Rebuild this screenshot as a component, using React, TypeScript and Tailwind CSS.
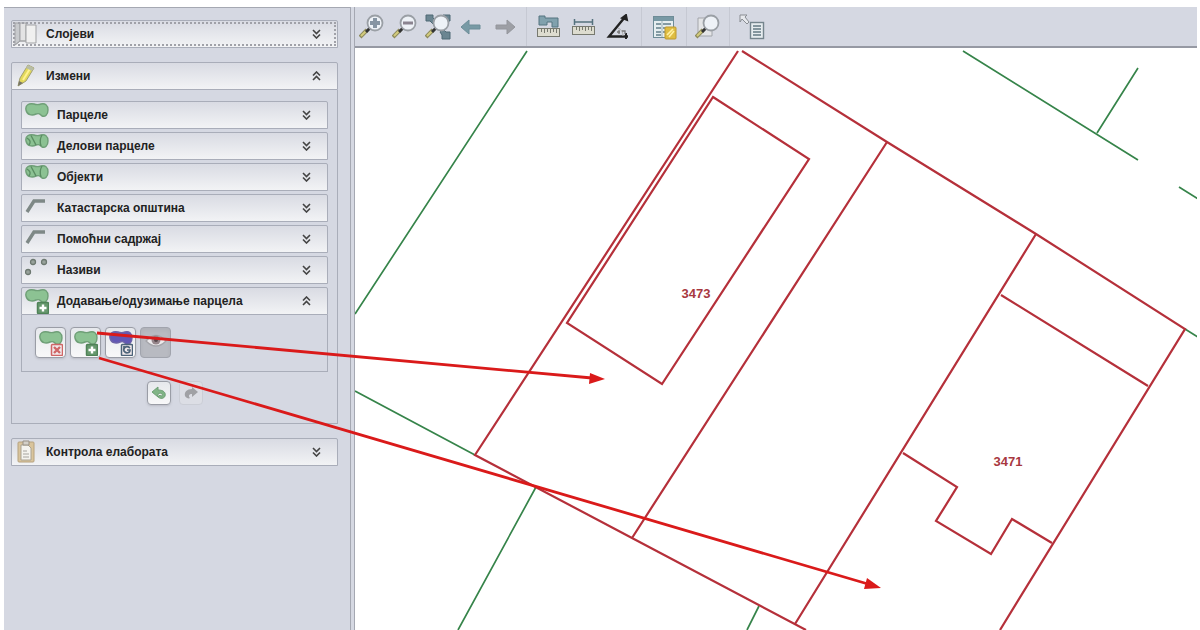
import { useState, type ReactNode } from "react";

type IconProps = { children: ReactNode };

function ToolIcon({ children }: IconProps) {
  return (
    <svg viewBox="0 0 26 26" className="block size-[26px]" fill="none">
      {children}
    </svg>
  );
}

const BLOB =
  "M2 8C1 3 5 1 10 2C13 3 14 3 17 2C21 1 24 3 24 8C24 13 21 15 18 14C16 12 15 11 12 12C8 14 3 13 2 8Z";

function Blob({ split = false, fill = "#8cc293", stroke = "#6f9f77" }) {
  return (
    <g strokeWidth="1.4">
      <path d={BLOB} fill={fill} stroke={stroke} />
      {split && <path d="M7 2.500L12 12M18 2Q15 7 17 13M3 5Q8 8 5 12" stroke="#5b8d63" />}
    </g>
  );
}

function Magnifier({ children }: { children?: ReactNode }) {
  return (
    <>
      <path d="M1 23L8 16" stroke="#8d8a5c" strokeWidth="4" />
      <path d="M2 22L7 17" stroke="#d3cc7d" strokeWidth="2" />
      <path d="M7 18L11 14" stroke="#333" strokeWidth="3" />
      <circle cx="16" cy="9" r="7.5" fill="#eef2f7" stroke="#9a9fa5" strokeWidth="1.8" />
      {children}
    </>
  );
}

function Ruler({ y }: { y: number }) {
  return (
    <g stroke="#77796f">
      <rect x="1.5" y={y + 0.5} width="22" height="8" fill="#dddccf" />
      <path d={`M5.5 ${y + 1}v3M8.5 ${y + 1}v4M11.5 ${y + 1}v3M14.5 ${y + 1}v4M17.5 ${y + 1}v3M20.5 ${y + 1}v4`} />
    </g>
  );
}

const navTools = [
  {
    label: "Увећај",
    icon: (
      <Magnifier>
        <path d="M11 9H21M16 4V14" stroke="#8795a3" strokeWidth="4" />
      </Magnifier>
    ),
  },
  {
    label: "Умањи",
    icon: (
      <Magnifier>
        <path d="M11 9H21" stroke="#8b8490" strokeWidth="3" />
      </Magnifier>
    ),
  },
  {
    label: "Цео приказ",
    icon: (
      <>
        <path d="M1 1H8V4L11 7L8 10L5 7H1ZM25 1H18V4L15 7L18 10L21 7H25ZM25 25H17V21L15 18L18 15L21 18H25Z" fill="#6b8591" stroke="#4e6874" />
        <Magnifier />
      </>
    ),
  },
  {
    label: "Назад",
    icon: <path d="M3 13L11 6V11H22V15H11V20Z" fill="#789aa5" stroke="#6d8d98" />,
  },
  {
    label: "Напред",
    icon: <path d="M24 13L16 6V11H5V15H16V20Z" fill="#9d9fa5" stroke="#94969c" />,
  },
];

const measureTools = [
  {
    label: "Мерење површине",
    icon: (
      <>
        <path d="M3 2H9V4H22V13H16V8H11V11H3Z" fill="#81a1ad" stroke="#547480" />
        <Ruler y={14} />
      </>
    ),
  },
  {
    label: "Мерење дужине",
    icon: (
      <>
        <path d="M3 8H22M3.5 5V11M21.5 5V11" stroke="#55717e" strokeWidth="1.5" />
        <Ruler y={12} />
      </>
    ),
  },
  {
    label: "Мерење угла",
    icon: (
      <>
        <path d="M19 3L3 22.500H22" stroke="#222" strokeWidth="2.4" />
        <path d="M16 4L20 1L21 6ZM20 19V25" fill="#222" stroke="#222" strokeWidth="2" />
        <path d="M12 14Q17 16 17 22" stroke="#aaa" />
        <path d="M11 18H14M13 16V20M16 17H19V20" stroke="#777" strokeWidth="1.3" />
      </>
    ),
  },
];

const tableTools = [
  {
    label: "Табела",
    icon: (
      <>
        <rect x="2.5" y="2.5" width="20" height="21" fill="#e6eef0" stroke="#6e8c97" />
        <rect x="3" y="3" width="19" height="4" fill="#7899a5" />
        <path d="M5 10H10M12 10H20M5 14H10M12 14H20M5 18H10M12 18H20M5 21H10" stroke="#64808b" strokeWidth="1.6" />
        <path d="M11 7V23" stroke="#9bb1b8" />
        <rect x="14" y="13" width="11" height="12" rx="1" fill="#dfbd42" stroke="#bd982e" />
        <path d="M16 21L22 15M18 23L23 17" stroke="#fff0a0" strokeWidth="1.7" />
      </>
    ),
  },
];

const searchTools = [
  {
    label: "Претрага",
    icon: (
      <>
        <path d="M3 4H17V22H3Z" fill="#e4e5e7" stroke="#a2a5aa" />
        <Magnifier />
      </>
    ),
  },
];

const infoTools = [
  {
    label: "Информације",
    icon: (
      <>
        <path d="M1 1H8L6 3L10 8L8 10L3 5L1 8Z" fill="#e7e9ed" stroke="#898d93" />
        <rect x="11.5" y="8.5" width="13" height="16" fill="#e6ecef" stroke="#75858d" strokeWidth="1.4" />
        <path d="M14 12H22M14 15H22M14 18H22M14 21H22" stroke="#647a84" strokeWidth="1.3" />
      </>
    ),
  },
];

const toolGroups = [
  { tools: navTools, className: "gap-[7px] pl-1 pr-[9px]" },
  { tools: measureTools, className: "gap-[9px] px-[9px]" },
  { tools: tableTools, className: "px-[9px]" },
  { tools: searchTools, className: "px-2" },
  { tools: infoTools, className: "px-[9px]" },
];

function Toolbar() {
  return (
    <div className="flex h-[41px] items-center border-b-2 border-[#9699a3] bg-[#d5d8e2]">
      {toolGroups.map((group, i) => (
        <div
          key={i}
          className={`flex h-full items-center ${group.className} ${
            i < toolGroups.length - 1 ? "border-r border-[#c6c9d3]" : ""
          }`}
        >
          {group.tools.map((tool) => (
            <button key={tool.label} type="button" aria-label={tool.label}>
              <ToolIcon>{tool.icon}</ToolIcon>
            </button>
          ))}
        </div>
      ))}
    </div>
  );
}

function Chevrons({ open }: { open: boolean }) {
  return (
    <svg viewBox="0 0 9 10" className="h-[10px] w-[9px] shrink-0" fill="none" stroke="#444" strokeWidth="1.6">
      <path d={open ? "M1 4.5L4.5 1L8 4.5M1 9L4.5 5.5L8 9" : "M1 1L4.5 4.5L8 1M1 5.5L4.5 9L8 5.5"} />
    </svg>
  );
}

type SectionProps = {
  title: string;
  icon: ReactNode;
  nested?: boolean;
  focused?: boolean;
  defaultOpen?: boolean;
  children?: ReactNode;
};

function Section({ title, icon, nested, focused, defaultOpen = false, children }: SectionProps) {
  const [open, setOpen] = useState(defaultOpen);

  return (
    <section>
      <button
        type="button"
        aria-expanded={open}
        onClick={() => setOpen((o) => !o)}
        className={`flex h-7 w-full items-center rounded-t-xs border border-[#a9adb9] bg-linear-to-b from-[#d9dbe3] to-[#f2f3f5] pr-4 text-left text-xs font-bold text-[#222] ${
          nested ? "pl-[3px]" : "pl-[2px]"
        } ${focused ? "outline-2 -outline-offset-4 outline-dotted outline-[#a0a1a8]" : ""}`}
      >
        <span className="mr-2 h-full w-6 shrink-0">{icon}</span>
        <span className="flex-1 whitespace-nowrap">{title}</span>
        <Chevrons open={open} />
      </button>
      {open && children && <div className="border border-t-0 border-[#a9adb9]">{children}</div>}
    </section>
  );
}

function ItemIcon({ children }: IconProps) {
  return (
    <svg viewBox="1 0 24 26" className="block h-[26px] w-6" fill="none">
      {children}
    </svg>
  );
}

function Badge({ kind }: { kind: "add" | "remove" | "refresh" }) {
  const color = kind === "add" ? "#4f8257" : kind === "remove" ? "#cf6666" : "#4c6379";
  return (
    <g stroke={color} transform="translate(-1 -1)">
      <rect x="14.5" y="15.5" width="11" height="11" rx="1" fill={kind === "add" ? "#67986e" : "#f1e9eb"} strokeWidth="1.5" />
      {kind === "add" && <path d="M20 17.5V24.5M16.5 21H23.5" stroke="#fff" strokeWidth="2.4" />}
      {kind === "remove" && <path d="M17 18L23 24M23 18L17 24" strokeWidth="2.4" />}
      {kind === "refresh" && <path d="M23 19C19 16 16 19 17 22C19 25 23 24 23 21H20M17 17V20" strokeWidth="1.7" />}
    </g>
  );
}

const blobIcon = (
  <ItemIcon>
    <Blob />
  </ItemIcon>
);
const splitIcon = (
  <ItemIcon>
    <Blob split />
  </ItemIcon>
);
const lineIcon = (
  <ItemIcon>
    <path d="M3 17L10 6H21" stroke="#7e8886" strokeWidth="3.4" />
  </ItemIcon>
);
const dotsIcon = (
  <ItemIcon>
    <g fill="#98a29b" stroke="#6d7870" strokeWidth="1.3">
      <circle cx="9" cy="5" r="2.5" />
      <circle cx="20" cy="5" r="2.5" />
      <circle cx="4" cy="15" r="2.5" />
    </g>
  </ItemIcon>
);

const layers = [
  { title: "Парцеле", icon: blobIcon },
  { title: "Делови парцеле", icon: splitIcon },
  { title: "Објекти", icon: splitIcon },
  { title: "Катастарска општина", icon: lineIcon },
  { title: "Помоћни садржај", icon: lineIcon },
  { title: "Називи", icon: dotsIcon },
];

const raised =
  "flex items-center justify-center rounded-sm border border-[#9a9da6] bg-linear-to-b from-[#e6e8ec] to-[#f8f8f9] shadow-sm";

function ParcelTools() {
  return (
    <div className="flex gap-1 px-[13px] pt-3 pb-[13px]">
      <button type="button" aria-label="Уклони парцелу" className={`size-[31px] ${raised}`}>
        <ItemIcon>
          <Blob />
          <Badge kind="remove" />
        </ItemIcon>
      </button>
      <button type="button" aria-label="Додај парцелу" className={`size-[31px] ${raised}`}>
        <ItemIcon>
          <Blob />
          <Badge kind="add" />
        </ItemIcon>
      </button>
      <button type="button" aria-label="Освежи парцеле" className={`size-[31px] ${raised}`}>
        <ItemIcon>
          <Blob fill="#6257b5" stroke="#6c62a8" />
          <Badge kind="refresh" />
        </ItemIcon>
      </button>
      <button
        type="button"
        aria-label="Прикажи"
        aria-pressed="true"
        className="flex size-[31px] items-center justify-center rounded-sm border border-[#a1a4ad] bg-[#b8bac1] shadow-inner"
      >
        <ItemIcon>
          <path d="M3 11Q13 0 23 11Q13 21 3 11Z" fill="#eceaec" stroke="#a5a5aa" strokeWidth="1.3" />
          <circle cx="13" cy="10" r="4.5" fill="#96868b" />
          <circle cx="13" cy="10" r="2" fill="#57474b" />
        </ItemIcon>
      </button>
    </div>
  );
}

function Sidebar() {
  return (
    <aside className="w-[347px] shrink-0 border-t border-r border-[#a5a8b2] bg-[#d5d8e2] pt-3 pr-3 pl-[7px]">
      <div className="flex flex-col gap-[14px]">
        <Section
          title="Слојеви"
          focused
          icon={
            <svg viewBox="0 0 24 26" className="h-[26px] w-6" fill="#e3e3e4" stroke="#a1a2a5">
              <path d="M1 2H6V20L1 24Z" fill="#c8cacd" />
              <path d="M6 2H12V20H6Z" />
              <path d="M12 4H22V22H12Z" fill="#f0f0f0" />
              <path d="M1 24L6 20H12" fill="none" />
            </svg>
          }
        />
        <Section
          title="Измени"
          defaultOpen
          icon={
            <svg viewBox="0 0 24 26" className="h-[26px] w-6" fill="none">
              <path d="M4 23L6 15L14 2L20 5L12 18Z" fill="#e3d95b" stroke="#a2a071" />
              <path d="M9 17L17 4" stroke="#fff292" strokeWidth="2" />
              <path d="M14 2L20 5L18 8L12 5Z" fill="#b8bda7" />
              <path d="M4 23L5 18L9 20Z" fill="#777568" />
            </svg>
          }
        >
          <div className="flex flex-col gap-[3px] px-[9px] pt-[11px]">
            {layers.map((layer) => (
              <Section key={layer.title} nested title={layer.title} icon={layer.icon} />
            ))}
            <Section
              nested
              defaultOpen
              title="Додавање/одузимање парцела"
              icon={
                <ItemIcon>
                  <Blob />
                  <Badge kind="add" />
                </ItemIcon>
              }
            >
              <ParcelTools />
            </Section>
          </div>
          <div className="flex justify-center gap-2 pt-[9px] pb-[18px]">
            <button type="button" aria-label="Поништи" className={`size-6 ${raised}`}>
              <svg viewBox="0 0 16 16" className="size-4" fill="none">
                <path d="M1 7L7 2V5C13 5 15 8 14 11C13 14 9 14 7 12L9 10C11 12 12 10 11 9C10 8 9 8 7 9V12Z" fill="#80b486" stroke="#6e9f75" />
              </svg>
            </button>
            <button
              type="button"
              aria-label="Понови"
              className="flex size-6 items-center justify-center rounded-sm border border-[#cbced6] bg-[#dcdee5]"
            >
              <svg viewBox="0 0 16 16" className="size-4" fill="none">
                <path d="M15 7L9 2V4C4 4 1 7 2 11C3 13 6 14 7 13C5 11 6 9 9 9V12Z" fill="#a0a1a5" />
              </svg>
            </button>
          </div>
        </Section>
        <Section
          title="Контрола елабората"
          icon={
            <svg viewBox="0 0 24 26" className="h-[26px] w-6" fill="none">
              <rect x="4" y="3" width="16" height="20" rx="1" fill="#d9c49c" stroke="#b6a27f" />
              <path d="M7 6H14L17 9V21H7Z" fill="#f5f4ef" stroke="#aaa393" />
              <path d="M9 2H15V6H9Z" fill="#d4d0c8" stroke="#999185" />
              <path d="M9 12H13M9 15H15M9 18H15" stroke="#a6a49f" />
            </svg>
          }
        />
      </div>
    </aside>
  );
}

function ParcelMap() {
  return (
    <svg
      viewBox="355 48 842 582"
      preserveAspectRatio="xMinYMin slice"
      className="block min-h-0 w-full flex-1"
      fill="none"
    >
      <g stroke="#36844a" strokeWidth="1.7">
        <path d="M527 51L355 314M355 391L475 455M536 487L458 630M759 606L747 630" />
        <path d="M963 51L1138 160M1138 68L1097 133M1179 187L1198 199M1185 329L1198 337" />
      </g>
      <g stroke="#b5303a" strokeWidth="2.2">
        <path d="M738 51L475 455L632 538L806 630" />
        <path d="M742 51L887 142L1036 234L1185 329L1000 630" />
        <path d="M887 142L632 538M1036 234L795 624M1001 295L1148 386" />
        <path d="M713 97L809 159L662 384L567 323Z" />
        <path d="M903 453L957 487L936 521L991 554L1012 519L1052 543" />
      </g>
      <g fill="#a8383f" textAnchor="middle" className="text-[13px] font-bold">
        <text x="696" y="298">3473</text>
        <text x="1008" y="466">3471</text>
      </g>
    </svg>
  );
}

// Red pointers from the toolbar buttons to the parcels they affect
function Pointers() {
  return (
    <svg
      viewBox="0 0 1200 630"
      preserveAspectRatio="xMinYMin slice"
      className="pointer-events-none absolute inset-0 size-full"
      aria-hidden="true"
    >
      <g stroke="#da1a1a" strokeWidth="2.8">
        <path d="M97 333L592 378M99 358L868 584" />
      </g>
      <g fill="#da1a1a">
        <path d="M605 379L589 384L590 373Z" />
        <path d="M881 588L864 589L867 578Z" />
      </g>
    </svg>
  );
}

function App() {
  return (
    <div className="relative flex h-screen overflow-hidden bg-white pt-[7px] pr-[3px] pl-1 font-['Liberation_Sans',Arial,sans-serif]">
      <Sidebar />
      <div className="w-1 shrink-0 border-r border-[#a5a8b2] bg-[#d5d8e2]" />
      <main className="flex min-w-0 flex-1 flex-col">
        <Toolbar />
        <ParcelMap />
      </main>
      <Pointers />
    </div>
  );
}

export default App;
